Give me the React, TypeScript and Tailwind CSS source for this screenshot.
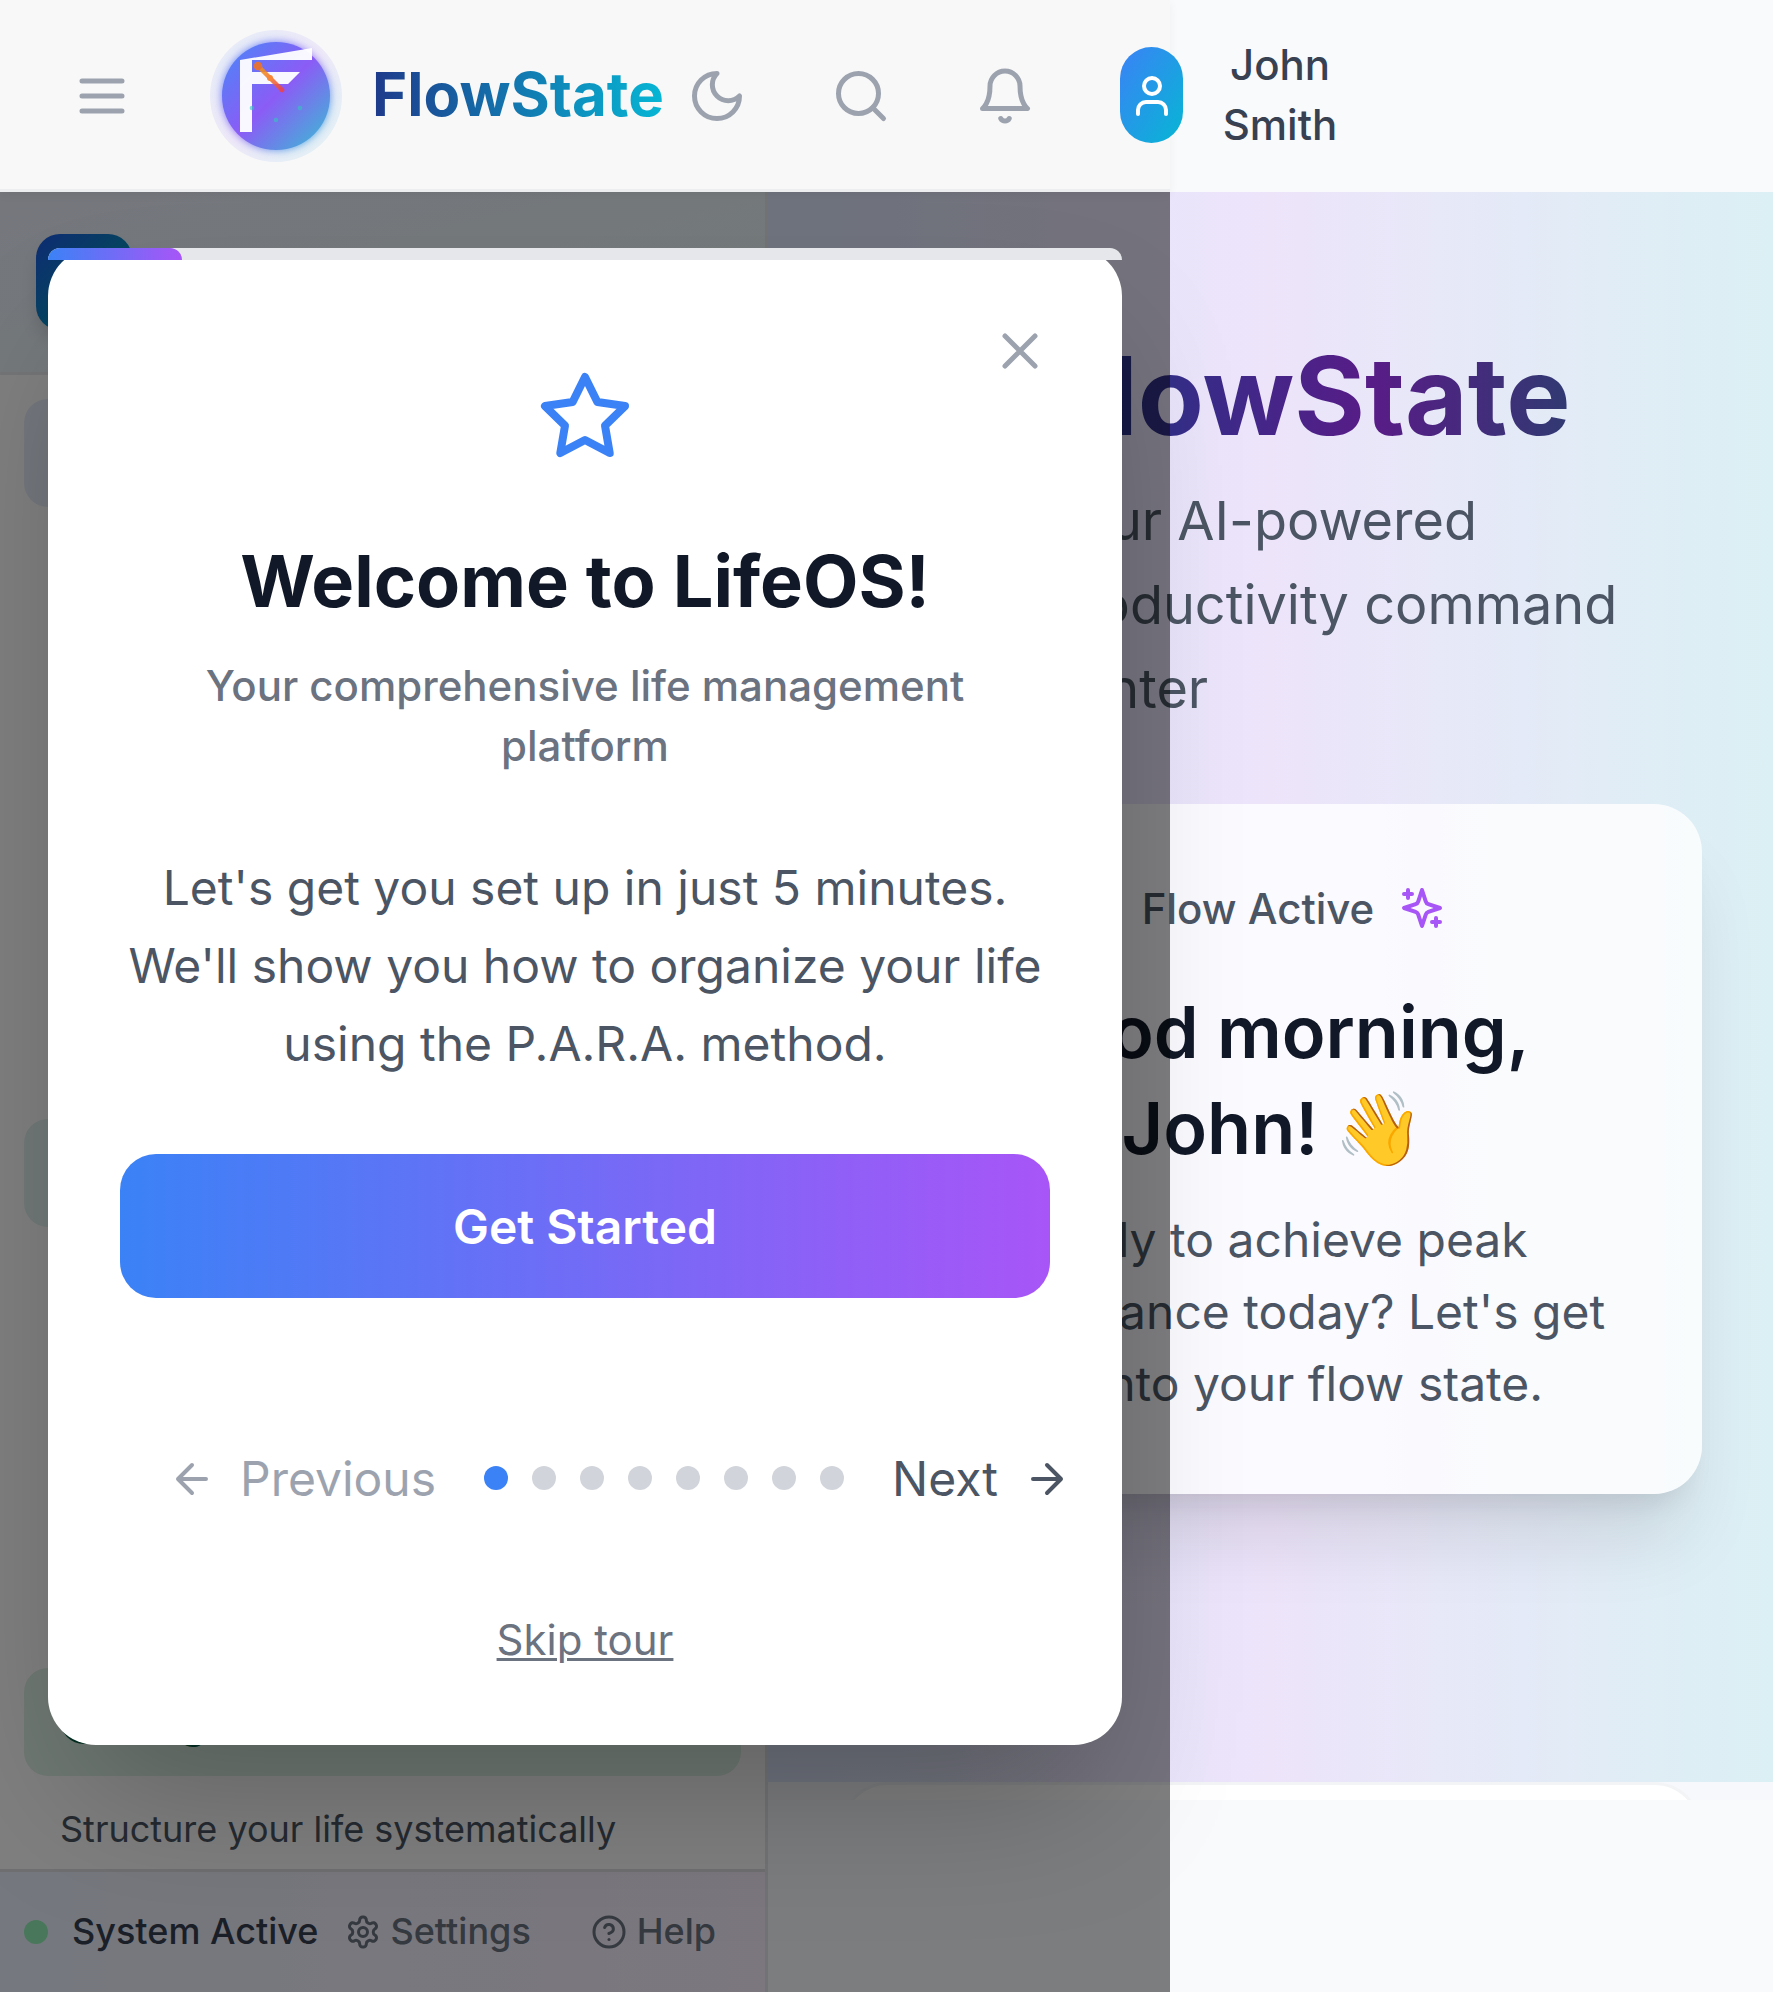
import React from "react";

type IconProps = { className?: string; children: React.ReactNode };

function Icon({ className, children }: IconProps) {
  return (
    <svg
      viewBox="0 0 24 24"
      fill="none"
      stroke="currentColor"
      strokeWidth={2}
      strokeLinecap="round"
      strokeLinejoin="round"
      className={className}
    >
      {children}
    </svg>
  );
}

function Logo() {
  return (
    <svg viewBox="0 0 144 144" className="size-[144px] shrink-0 overflow-visible">
      <defs>
        <linearGradient id="halo" x1="0" y1="0" x2="1" y2="1">
          <stop offset="0" stopColor="#3b82f6" />
          <stop offset="0.5" stopColor="#8b5cf6" />
          <stop offset="1" stopColor="#06b6d4" />
        </linearGradient>
        <linearGradient id="disc" x1="0" y1="0" x2="1" y2="1">
          <stop offset="0" stopColor="#4788f8" />
          <stop offset="0.5" stopColor="#8b5cf6" />
          <stop offset="1" stopColor="#35c1d1" />
        </linearGradient>
        <linearGradient id="spark" gradientUnits="userSpaceOnUse" x1="54" y1="42" x2="78" y2="66">
          <stop offset="0" stopColor="#f59e0b" />
          <stop offset="1" stopColor="#ef4444" />
        </linearGradient>
        <filter id="glow" x="-20%" y="-20%" width="140%" height="140%">
          <feGaussianBlur stdDeviation="4" />
        </filter>
      </defs>
      <circle cx="72" cy="72" r="66" fill="url(#halo)" opacity="0.1" />
      <circle cx="72" cy="72" r="54" fill="url(#halo)" opacity="0.9" filter="url(#glow)" />
      <circle cx="72" cy="72" r="54" fill="url(#disc)" />
      <path d="M36 36 108 24V36H48V48H96L84 60H48V108H36Z" fill="#fff" opacity="0.95" />
      <g opacity="0.85">
        <path d="M54 42 78 66" stroke="url(#spark)" strokeWidth="4.5" strokeLinecap="round" />
        <circle cx="54" cy="42" r="4.3" fill="#f97316" />
        <circle cx="66" cy="54" r="3" fill="#f97316" />
        <circle cx="78" cy="66" r="2.3" fill="#ef4444" />
      </g>
      <g fill="#34c3c0" opacity="0.6">
        <circle cx="48" cy="84" r="2.3" />
        <circle cx="72" cy="96" r="2.3" />
        <circle cx="96" cy="84" r="2.3" />
      </g>
    </svg>
  );
}

function Header() {
  return (
    <header className="relative z-30 flex h-[192px] w-[1170px] shrink-0 items-center border-b-[3px] border-[#e5e7eb]/60 bg-white/95 pt-[3px] shadow-[0_3px_9px_rgba(0,0,0,0.05)]">
      <Icon className="ml-[72px] size-[60px] shrink-0 text-[#9ca3af]">
        <path d="M4 6h16M4 12h16M4 18h16" />
      </Icon>
      <div className="ml-[72px]">
        <Logo />
      </div>
      <span className="mb-[5px] ml-[24px] bg-linear-to-r/srgb from-[#1e3a8a] to-[#06b6d4] bg-clip-text text-[60px] leading-[84px] font-bold text-transparent">
        FlowState
      </span>
      <div className="absolute top-0 left-[687px] flex h-[192px] items-center">
        <Icon className="size-[60px] shrink-0 text-[#9ca3af]">
          <path d="M12 3a6 6 0 0 0 9 9 9 9 0 1 1-9-9Z" />
        </Icon>
        <Icon className="ml-[84px] size-[60px] shrink-0 text-[#9ca3af]">
          <circle cx="11" cy="11" r="8" />
          <path d="m21 21-4.3-4.3" />
        </Icon>
        <Icon className="ml-[84px] size-[60px] shrink-0 text-[#9ca3af]">
          <path d="M6 8a6 6 0 0 1 12 0c0 7 3 9 3 9H3s3-2 3-9" />
          <path d="M10.3 21a1.94 1.94 0 0 0 3.4 0" />
        </Icon>
        <div className="mb-[2px] ml-[85px] flex h-[96px] w-[63px] shrink-0 items-center justify-center rounded-full bg-linear-to-br/srgb from-[#3b82f6] to-[#06b6d4]">
          <Icon className="mt-[2px] size-[48px] shrink-0 text-white">
            <path d="M19 21v-2a4 4 0 0 0-4-4H9a4 4 0 0 0-4 4v2" />
            <circle cx="12" cy="7" r="4" />
          </Icon>
        </div>
        <span className="mb-[2px] ml-[36px] w-[122px] text-center text-[42px] leading-[60px] font-medium text-[#374151]">
          John Smith
        </span>
      </div>
    </header>
  );
}

function Sidebar() {
  return (
    <aside className="flex w-[768px] shrink-0 flex-col border-r-[3px] border-[#e5e7eb] bg-white">
      <div className="h-[183px] shrink-0 border-b-[3px] border-[#e9eaee] bg-linear-to-br/srgb from-[#eaeefb] to-[#e9f8f5] pt-[42px] pl-[36px]">
        <div className="size-[96px] rounded-[24px] bg-linear-to-br/srgb from-[#1e5ae8] from-0% to-[#0597b4] to-70% shadow-[0_12px_18px_-3px_rgba(0,0,0,0.15)]" />
      </div>
      <nav className="flex flex-1 flex-col px-[24px] pt-[24px]">
        <div className="h-[108px] shrink-0 rounded-[24px] bg-[#e6eefa]" />
        <div className="mt-[612px] h-[108px] shrink-0 rounded-[24px] bg-[#e2f3f1]" />
        <div className="mt-[441px] flex h-[108px] shrink-0 items-center gap-[24px] rounded-[24px] bg-[#dff3e6] pl-[36px] text-[42px] font-semibold text-[#065f46]">
          <div className="mb-[4px] size-[48px] rounded-full bg-[#065f46]" />
          Organize
        </div>
        <p className="mt-[29px] pl-[36px] text-[36px] leading-[48px] whitespace-nowrap text-[#4b5563]">
          Structure your life systematically
        </p>
      </nav>
      <div className="flex h-[123px] shrink-0 items-center border-t-[3px] border-[#dfdfe2] bg-linear-to-r/srgb from-[#eaf1fc] to-[#f8effd] pl-[24px] text-[36px] leading-[48px] font-medium whitespace-nowrap text-[#6b7280]">
        <span className="size-[24px] rounded-full bg-[#92efb6]" />
        <span className="mb-[2px] ml-[24px] text-[#374151]">System Active</span>
        <Icon className="ml-[27px] size-[36px]">
          <path d="M12.22 2h-.44a2 2 0 0 0-2 2v.18a2 2 0 0 1-1 1.73l-.43.25a2 2 0 0 1-2 0l-.15-.08a2 2 0 0 0-2.73.73l-.22.38a2 2 0 0 0 .73 2.73l.15.1a2 2 0 0 1 1 1.72v.51a2 2 0 0 1-1 1.74l-.15.09a2 2 0 0 0-.73 2.73l.22.38a2 2 0 0 0 2.73.73l.15-.08a2 2 0 0 1 2 0l.43.25a2 2 0 0 1 1 1.73V20a2 2 0 0 0 2 2h.44a2 2 0 0 0 2-2v-.18a2 2 0 0 1 1-1.73l.43-.25a2 2 0 0 1 2 0l.15.08a2 2 0 0 0 2.73-.73l.22-.39a2 2 0 0 0-.73-2.73l-.15-.08a2 2 0 0 1-1-1.74v-.5a2 2 0 0 1 1-1.74l.15-.09a2 2 0 0 0 .73-2.73l-.22-.38a2 2 0 0 0-2.73-.73l-.15.08a2 2 0 0 1-2 0l-.43-.25a2 2 0 0 1-1-1.73V4a2 2 0 0 0-2-2z" />
          <circle cx="12" cy="12" r="3" />
        </Icon>
        <span className="mb-[2px] ml-[9px]">Settings</span>
        <Icon className="ml-[60px] size-[36px]">
          <circle cx="12" cy="12" r="10" />
          <path d="M9.09 9a3 3 0 0 1 5.83 1c0 2-3 3-3 3" />
          <path d="M12 17h.01" />
        </Icon>
        <span className="mb-[2px] ml-[10px]">Help</span>
      </div>
    </aside>
  );
}

function Hero() {
  return (
    <main className="min-w-0 flex-1">
      <div className="h-[1608px] overflow-hidden bg-[#f6f8fc]">
        <section className="h-[1590px] bg-linear-to-r/srgb from-[#dde7fc] via-[#ede4fa] to-[#dbf0f4] pt-[144px] pr-[71px] pl-[72px]">
          <div className="pl-[205px]">
            <h1 className="w-full bg-linear-to-r/srgb from-[#1e3a8a] via-[#581c87] to-[#164e63] bg-clip-text text-[108px] leading-[120px] font-bold text-transparent">
              FlowState
            </h1>
            <p className="mt-[23px] w-[600px] pb-[1px] text-[54px] leading-[84px] text-[#4b5563]">
              Your AI-powered productivity command center
            </p>
          </div>
          <div className="mt-[72px] h-[690px] rounded-[48px] bg-white/80 pt-[74px] text-center shadow-[0_60px_75px_-15px_rgba(0,0,0,0.1),0_24px_30px_-18px_rgba(0,0,0,0.1)]">
            <div className="flex h-[60px] items-center justify-center gap-[24px] pr-[2px] text-[42px] font-medium text-[#4b5563]">
              <span className="size-[24px] rounded-full bg-[#22c55e]" />
              <span>Flow Active</span>
              <Icon className="size-[48px] text-[#a855f7]">
                <path d="m12 3-1.912 5.813a2 2 0 0 1-1.275 1.275L3 12l5.813 1.912a2 2 0 0 1 1.275 1.275L12 21l1.912-5.813a2 2 0 0 1 1.275-1.275L21 12l-5.813-1.912a2 2 0 0 1-1.275-1.275L12 3Z" />
                <path d="M5 3v4M19 17v4M3 5h4M17 19h4" />
              </Icon>
            </div>
            <h2 className="mt-[46px] text-[72px] leading-[96px] font-semibold text-[#111827]">
              Good morning,
              <br />
              John! <span className="-mr-[4px] -ml-[2px]">👋</span>
            </h2>
            <p className="mt-[28px] text-[48px] leading-[72px] text-[#4b5563]">
              Ready to achieve peak
              <br />
              performance today? Let's get
              <br />
              you into your flow state.
            </p>
          </div>
        </section>
        <div className="mr-[71px] ml-[72px] h-[300px] rounded-[48px] border-[3px] border-[#f3f4f6] bg-white" />
      </div>
    </main>
  );
}

function WelcomeModal() {
  return (
    <div className="absolute inset-y-0 left-0 z-20 flex w-[1170px] items-center justify-center bg-black/50">
      <div className="relative h-[1497px] w-[1074px] rounded-[48px] bg-white px-[72px] pt-[121px] text-center shadow-[0_75px_150px_-36px_rgba(0,0,0,0.25)]">
        <div className="absolute inset-x-0 top-0 h-[12px] rounded-t-[12px] bg-[#e5e7eb]">
          <div className="h-full w-[12.5%] rounded-t-[12px] bg-linear-to-r/srgb from-[#3b82f6] to-[#a855f7]" />
        </div>
        <Icon className="absolute top-[73px] right-[72px] size-[60px] text-[#9ca3af]">
          <path d="M18 6 6 18M6 6l12 12" />
        </Icon>
        <Icon className="mx-auto size-[96px] text-[#3b82f6]">
          <polygon points="12 2 15.09 8.26 22 9.27 17 14.14 18.18 21.02 12 17.77 5.82 21.02 7 14.14 2 9.27 8.91 8.26 12 2" />
        </Icon>
        <h2 className="mt-[68px] text-[72px] leading-[96px] font-bold text-[#111827]">
          Welcome to LifeOS!
        </h2>
        <p className="mt-[27px] text-[42px] leading-[60px] font-medium text-[#6b7280]">
          Your comprehensive life management platform
        </p>
        <p className="-mx-[6px] mt-[73px] text-[48px] leading-[78px] text-[#4b5563]">
          Let's get you set up in just 5 minutes.
          <br />
          We'll show you how to organize your life
          <br />
          using the P.A.R.A. method.
        </p>
        <button className="mt-[71px] flex h-[144px] w-full items-center justify-center rounded-[36px] bg-linear-to-r/srgb from-[#3b82f6] to-[#a855f7] pt-[2px] text-[48px] font-semibold text-white">
          Get Started
        </button>
        <div className="mt-[145px] flex items-center text-[48px] leading-[72px] whitespace-nowrap">
          <div className="flex shrink-0 items-center gap-[24px] px-[48px] text-[#9ca3af]">
            <Icon className="size-[48px]">
              <path d="m12 19-7-7 7-7M19 12H5" />
            </Icon>
            Previous
          </div>
          <div className="mb-[2px] flex shrink-0 items-center gap-[24px]">
            <span className="size-[24px] rounded-full bg-[#3b82f6]" />
            {[1, 2, 3, 4, 5, 6, 7].map((n) => (
              <span key={n} className="size-[24px] rounded-full bg-[#d1d5db]" />
            ))}
          </div>
          <div className="flex shrink-0 items-center gap-[25px] px-[48px] text-[#4b5563]">
            Next
            <Icon className="size-[48px]">
              <path d="M5 12h14M12 5l7 7-7 7" />
            </Icon>
          </div>
        </div>
        <button className="mt-[95px] block w-full text-[42px] leading-[60px] text-[#6b7280] underline decoration-[3px] underline-offset-[3px]">
          Skip tour
        </button>
      </div>
    </div>
  );
}

export default function App() {
  return (
    <div className="relative flex h-[1992px] w-[1773px] flex-col overflow-hidden bg-[#f9fafc] font-['Inter',sans-serif]">
      <Header />
      <div className="flex min-h-0 flex-1">
        <Sidebar />
        <Hero />
      </div>
      <WelcomeModal />
    </div>
  );
}
